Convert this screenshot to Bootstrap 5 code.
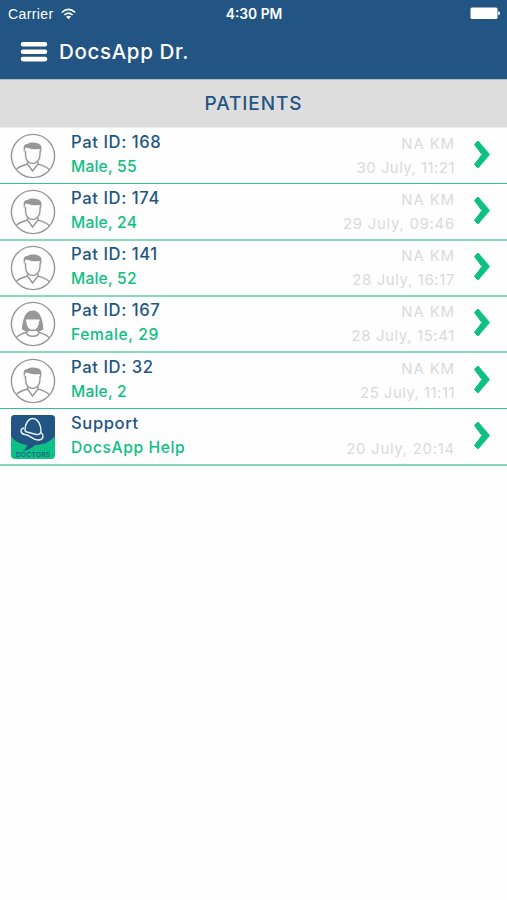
<!DOCTYPE html>
<html lang="en">
<head>
<meta charset="utf-8">
<meta name="viewport" content="width=device-width, initial-scale=1">
<title>DocsApp Dr.</title>
<link href="https://cdn.jsdelivr.net/npm/bootstrap@5.3.0/dist/css/bootstrap.min.css" rel="stylesheet">
<style>
:root{--navy:#225583;--green:#0dc083}
body{font-family:Inter,"Open Sans",sans-serif;background:#fefefe;color:var(--navy);overflow:hidden}
.top-area{background:var(--navy);height:79px}
.status{height:28px;font:14px/28px "Liberation Sans",sans-serif;padding:0 7px 0 8px}
.status>*{flex:1 1 0}
.carrier{letter-spacing:.4px}
.wifi{margin-left:7px}
.clock{font-weight:600;font-family:Inter,sans-serif;font-size:13.8px}
.titlebar{height:48px;padding-left:20px}
.brand{font-size:20.5px;font-weight:500;letter-spacing:.65px;line-height:48px;margin-left:11px}
.section-title{background:#ddd;height:49px;border-top:1px solid #a9bac9;border-bottom:1px solid #ececec;font-size:19px;font-weight:500;line-height:48px;letter-spacing:.9px}
.patient{height:56px;border-bottom:1px solid #2fc391;padding:0 17px 0 10px}
.patient.soft{border-bottom:2px solid #86dabb}
.patient.tall{height:57px}
.line-text{line-height:24px;font-weight:500;white-space:nowrap}
.names{margin-left:15px;padding-bottom:3px}
.who{letter-spacing:.6px;font-size:16.6px;margin-bottom:1px}
.sub{color:var(--green);font-size:15.6px;letter-spacing:.62px}
.sub.tight{letter-spacing:.2px}
.meta{color:#dadada;font-weight:400;font-size:15px;letter-spacing:.7px}
.meta.km{letter-spacing:.85px}
.meta.narrow{letter-spacing:.45px}
.meta.mid{letter-spacing:.6px}
.arrow{margin-left:18px;margin-bottom:3px}
svg{display:block;flex:none}
</style>
<script src="https://cdn.jsdelivr.net/npm/bootstrap@5.3.0/dist/js/bootstrap.bundle.min.js"></script>
</head>
<body>
<svg width="0" height="0" class="position-absolute" aria-hidden="true">
<defs>
<g id="male" fill="none" stroke="#979797" stroke-width="1.4"><circle cx="23" cy="23" r="21.6"/><path d="M15.500 18V22C15.500 27 19 30.500 22.500 30.500S30 27 30 22V18M6.500 36.500C9 33.500 12 32.500 17.500 31V28.500M28 28.500V31C33 32.500 36.500 33.500 39 36.500M17.500 31L22.500 38L28 31"/><path fill="#979797" stroke="none" d="M14 20C13 13 14 11 17.500 11C21 8.500 29 9.500 30.500 12C32 14 31.500 17 31 20L29.500 16C24 17 20 15.500 15.500 14.500Z"/></g>
<g id="female" fill="none" stroke="#979797" stroke-width="1.4"><circle cx="23" cy="23" r="21.6"/><path fill="#979797" stroke="none" d="M12 28C12.500 23 13.500 9.500 22.700 9.500S33 23 33.500 28C31.500 30.500 28 30.500 26 30C29.500 27 30.500 22 29.500 18.500H16C15 22 16 27 19.500 30C17 30.500 14 30.500 12 28Z"/><path d="M15.800 20C15.300 25 18 29.500 22.700 29.500S30 25 29.700 20M6.500 36.500C9 33.500 12 32.500 17 31L19 29M26.500 29L28.500 31C33 32.500 36.500 33.500 39 36.500M16.500 31.500C17.500 36.500 28 36.500 29 31.500"/></g>
<path id="chev" d="M1.500 4.500L5 1L16.500 14.500L5 28L1.500 24.500L9 14.500Z" fill="#0dc083" stroke="#0dc083" stroke-width="1" stroke-linejoin="round"/>
</defs>
</svg>
<header class="top-area text-white">
<div class="status d-flex align-items-center">
<div class="d-flex align-items-center"><span class="carrier">Carrier</span>
<svg class="wifi" width="15" height="12" viewBox="0 0 15 12" fill="none" stroke="#fff" stroke-width="1.7"><path d="M.8 4.500Q7.500-1.900 14.200 4.500M3.400 7Q7.500 3.100 11.600 7"/><path d="M5 8.700Q7.500 6.700 10 8.700L7.500 11.300Z" fill="#fff" stroke="none"/></svg></div>
<div class="clock text-center">4:30 PM</div>
<div class="d-flex justify-content-end"><svg width="30" height="14" viewBox="0 0 30 14" fill="#fff"><rect x=".5" y=".5" width="27" height="11.500" rx="1.500"/><path d="M28.200 4.300Q30 4.500 30 6.300T28.200 8.300Z"/></svg></div>
</div>
<div class="titlebar d-flex align-items-center">
<svg width="28" height="22" viewBox="0 0 28 22" stroke="#fff" stroke-width="4.600" stroke-linecap="round"><path d="M3 3.300H25M3 10.700H25M3 18.100H25"/></svg>
<span class="brand">DocsApp Dr.</span>
</div>
</header>
<div class="section-title text-center">PATIENTS</div>
<main id="list">
<div class="patient d-flex align-items-center"><svg width="46" height="46"><use href="#male"/></svg><div class="names"><div class="line-text who">Pat ID: 168</div><div class="line-text sub tight">Male, 55</div></div><div class="ms-auto text-end"><div class="line-text meta km">NA KM</div><div class="line-text meta narrow">30 July, 11:21</div></div><svg class="arrow" width="17" height="29"><use href="#chev"/></svg></div>
<div class="patient soft tall d-flex align-items-center"><svg width="46" height="46"><use href="#male"/></svg><div class="names"><div class="line-text who">Pat ID: 174</div><div class="line-text sub tight">Male, 24</div></div><div class="ms-auto text-end"><div class="line-text meta km">NA KM</div><div class="line-text meta">29 July, 09:46</div></div><svg class="arrow" width="17" height="29"><use href="#chev"/></svg></div>
<div class="patient soft d-flex align-items-center"><svg width="46" height="46"><use href="#male"/></svg><div class="names"><div class="line-text who">Pat ID: 141</div><div class="line-text sub tight">Male, 52</div></div><div class="ms-auto text-end"><div class="line-text meta km">NA KM</div><div class="line-text meta mid">28 July, 16:17</div></div><svg class="arrow" width="17" height="29"><use href="#chev"/></svg></div>
<div class="patient soft d-flex align-items-center"><svg width="46" height="46"><use href="#female"/></svg><div class="names"><div class="line-text who">Pat ID: 167</div><div class="line-text sub">Female, 29</div></div><div class="ms-auto text-end"><div class="line-text meta km">NA KM</div><div class="line-text meta mid">28 July, 15:41</div></div><svg class="arrow" width="17" height="29"><use href="#chev"/></svg></div>
<div class="patient d-flex align-items-center"><svg width="46" height="46"><use href="#male"/></svg><div class="names"><div class="line-text who">Pat ID: 32</div><div class="line-text sub tight">Male, 2</div></div><div class="ms-auto text-end"><div class="line-text meta km">NA KM</div><div class="line-text meta narrow">25 July, 11:11</div></div><svg class="arrow" width="17" height="29"><use href="#chev"/></svg></div>
<div class="patient soft tall d-flex align-items-center">
<svg width="46" height="46" viewBox="0 0 46 46"><rect x="1" y="1" width="44" height="44" rx="4" fill="#0dc083"/><path d="M1 22V5Q1 1 5 1H41Q45 1 45 5V22C39 29 32 31 25 31Q20 36 13 37Q17 34 17 31C10 30 4 27 1 22Z" fill="#225583"/><path d="M15 16C15 9 19 4 23 4.500C28 5 31 11 31 17Q31 21 26 20.500L19 18.500Q15 18 15 16M14 14C9 15 11 20 15 20.500C20 21 24 27 29 26C34 25 34 21 31 18.500" fill="none" stroke="#e9f1f7" stroke-width="1.500"/><text x="23" y="43" text-anchor="middle" textLength="34" font-family="Inter, sans-serif" font-size="6.500" font-weight="500" fill="#225583">DOCTORS</text></svg>
<div class="names"><div class="line-text who">Support</div><div class="line-text sub">DocsApp Help</div></div><div class="ms-auto text-end"><div class="line-text meta km">&nbsp;</div><div class="line-text meta">20 July, 20:14</div></div><svg class="arrow" width="17" height="29"><use href="#chev"/></svg></div>
</main>
</body>
</html>
